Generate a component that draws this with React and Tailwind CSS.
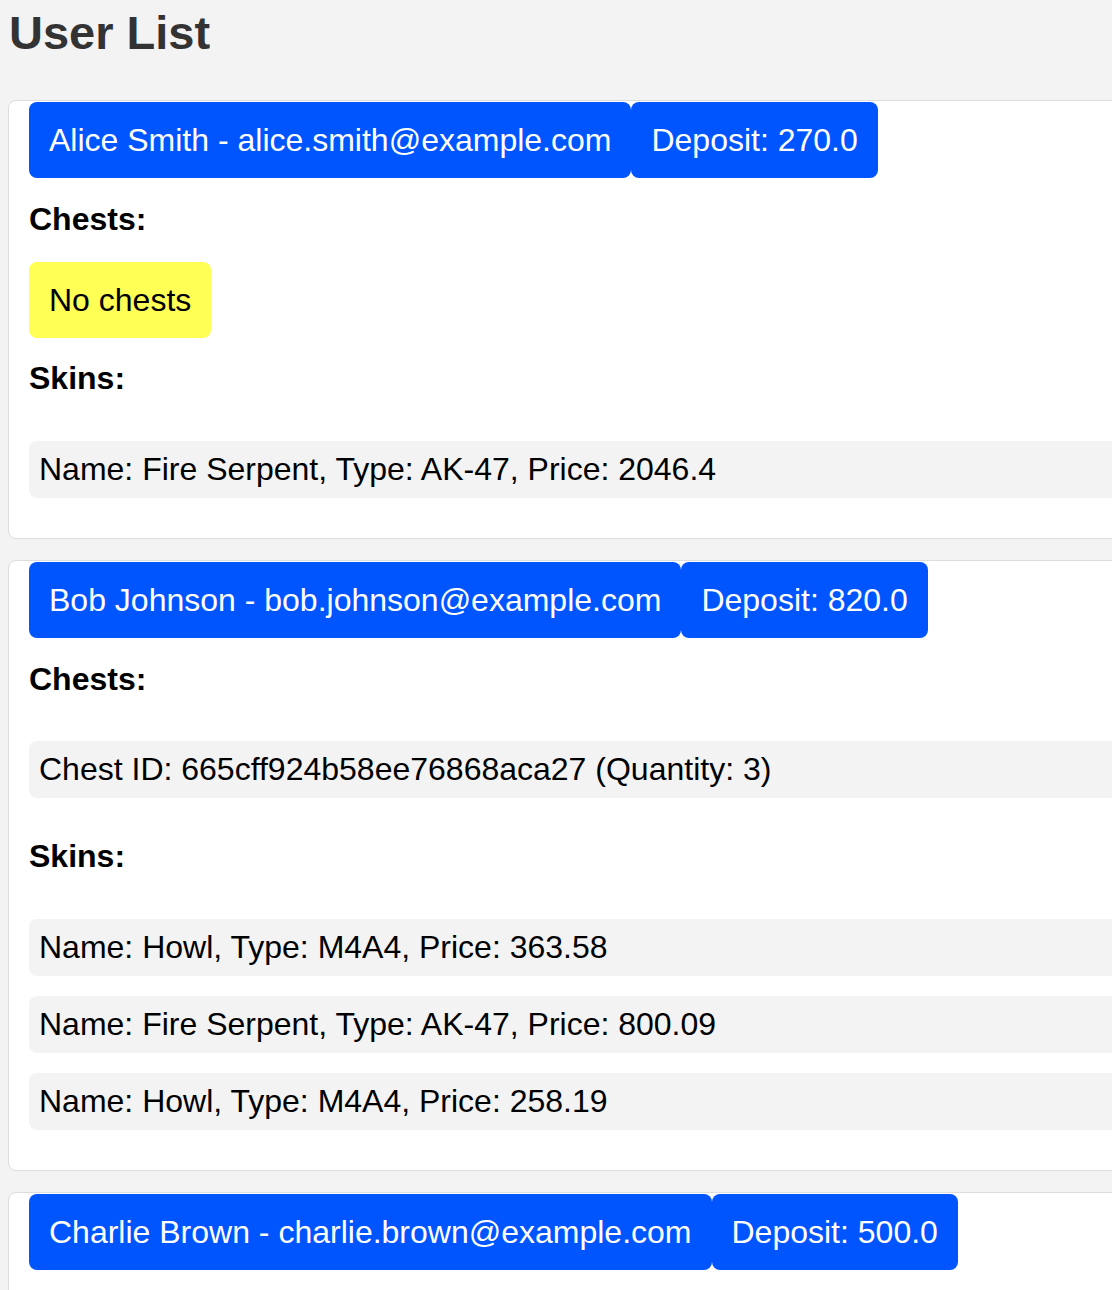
const users = [
  {
    name: "Alice Smith",
    email: "alice.smith@example.com",
    deposit: "270.0",
    chests: [],
    skins: [{ name: "Fire Serpent", type: "AK-47", price: "2046.4" }],
  },
  {
    name: "Bob Johnson",
    email: "bob.johnson@example.com",
    deposit: "820.0",
    chests: [{ id: "665cff924b58ee76868aca27", quantity: 3 }],
    skins: [
      { name: "Howl", type: "M4A4", price: "363.58" },
      { name: "Fire Serpent", type: "AK-47", price: "800.09" },
      { name: "Howl", type: "M4A4", price: "258.19" },
    ],
  },
  {
    name: "Charlie Brown",
    email: "charlie.brown@example.com",
    deposit: "500.0",
    chests: [],
    skins: [{ name: "Howl", type: "M4A4", price: "120.5" }],
  },
];

const blueTag = "rounded-[8px] bg-[#0055ff] p-[20px] leading-[36px] text-white";
const itemClass = "rounded-[8px] bg-[#f3f3f3] px-[10px] py-[10px] leading-[37px]";

function UserCard({ user }) {
  return (
    <div className="mb-[21px] w-[1400px] rounded-[8px] border border-[#dddddd] bg-white px-[20px] pt-px pb-[40px]">
      <div className="flex">
        <span className={blueTag}>
          {user.name} - {user.email}
        </span>
        <span className={blueTag}>Deposit: {user.deposit}</span>
      </div>

      <div className="mt-[23px] font-bold leading-[37px]">Chests:</div>
      {user.chests.length === 0 ? (
        <div className="mt-[24px] inline-block rounded-[8px] bg-[#ffff55] p-[20px] leading-[36px]">
          No chests
        </div>
      ) : (
        <div className="mt-[43px] flex flex-col gap-[20px] pb-[18px]">
          {user.chests.map((c) => (
            <div key={c.id} className={itemClass}>
              Chest ID: {c.id} (Quantity: {c.quantity})
            </div>
          ))}
        </div>
      )}

      <div className="mt-[22px] font-bold leading-[37px]">Skins:</div>
      <div className="mt-[44px] flex flex-col gap-[20px]">
        {user.skins.map((s, i) => (
          <div key={i} className={itemClass}>
            Name: {s.name}, Type: {s.type}, Price: {s.price}
          </div>
        ))}
      </div>
    </div>
  );
}

export default function App() {
  return (
    <div
      className="h-[1290px] overflow-hidden bg-[#f3f3f3] text-[32px] text-black"
      style={{ fontFamily: '"Liberation Sans", Arial, sans-serif' }}
    >
      <h1 className="pl-[9px] pt-[5px] text-[47px] font-bold leading-[56px] text-[#333333]">
        User List
      </h1>
      <div className="mt-[39px] pl-[8px]">
        {users.map((u) => (
          <UserCard key={u.email} user={u} />
        ))}
      </div>
    </div>
  );
}
